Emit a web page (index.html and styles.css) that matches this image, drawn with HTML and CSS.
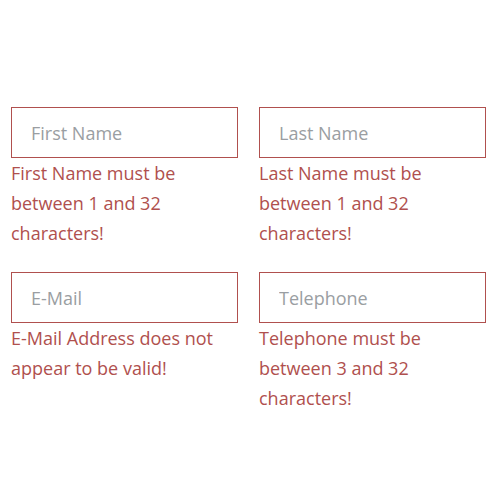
FILE: index.html
```html
<!DOCTYPE html>
<html>
<head>
<meta charset="utf-8">
<link rel="stylesheet" href="styles.css">
</head>
<body>
<div class="form">
  <div class="field">
    <div class="box"><input class="input" type="text" placeholder="First Name" autocomplete="off"></div>
    <div class="error">First Name must be between 1 and 32 characters!</div>
  </div>
  <div class="field">
    <div class="box"><input class="input" type="text" placeholder="Last Name" autocomplete="off"></div>
    <div class="error">Last Name must be between 1 and 32 characters!</div>
  </div>
  <div class="field">
    <div class="box"><input class="input" type="text" placeholder="E-Mail" autocomplete="off"></div>
    <div class="error">E-Mail Address does not appear to be valid!</div>
  </div>
  <div class="field">
    <div class="box"><input class="input" type="text" placeholder="Telephone" autocomplete="off"></div>
    <div class="error">Telephone must be between 3 and 32 characters!</div>
  </div>
</div>
</body>
</html>
```
FILE: styles.css
```css
html, body {
  margin: 0;
  padding: 0;
  background: #ffffff;
}
body {
  font-family: "Open Sans", "Noto Sans", sans-serif;
}
.form {
  display: grid;
  grid-template-columns: 227px 227px;
  column-gap: 21px;
  row-gap: 24px;
  padding: 107px 0 0 11px;
}
.field {
  display: flex;
  flex-direction: column;
}
.box {
  box-sizing: border-box;
  height: 51px;
  border: 1px solid #b0504e;
  background: #fff;
  display: flex;
}
.input {
  box-sizing: border-box;
  flex: 1;
  min-width: 0;
  height: 100%;
  margin: 0;
  border: 0;
  padding: 0 19px;
  font-family: inherit;
  font-size: 18px;
  color: #555;
  background: transparent;
  outline: none;
}
.input::placeholder {
  color: #9a9ea2;
}
.error {
  color: #b0504e;
  font-size: 18px;
  line-height: 30px;
  padding-right: 8px;
}
```
